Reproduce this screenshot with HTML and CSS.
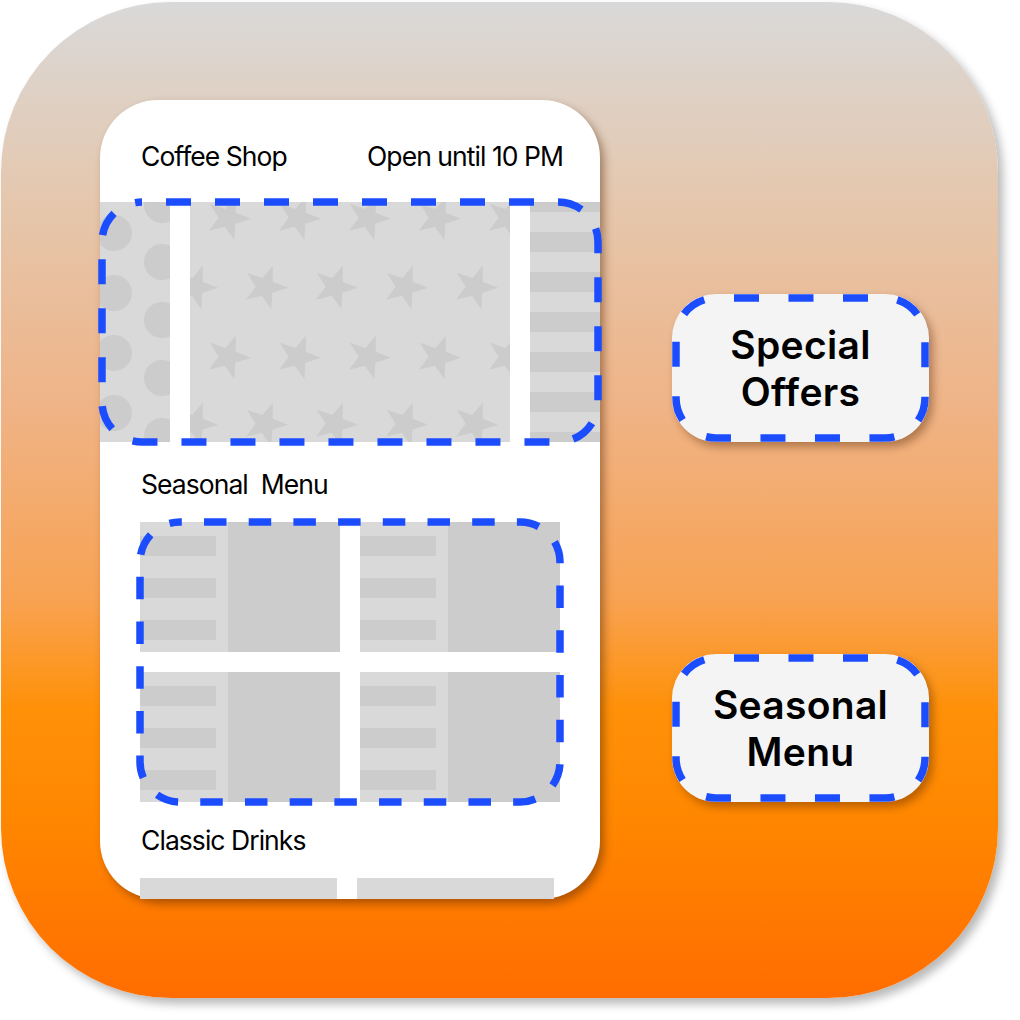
FILE: index.html
```html
<!DOCTYPE html>
<html lang="en">
<head>
<meta charset="utf-8">
<title>Coffee Shop</title>
<link rel="stylesheet" href="styles.css">
</head>
<body>
<div class="icon">
  <div class="phone">
    <div class="phone-header">
      <span>Coffee Shop</span>
      <span>Open until 10 PM</span>
    </div>

    <div class="banner">
      <div class="banner-viewport">
        <div class="banner-track">
          <div class="promo">
            <svg class="promo-art" width="320" height="240" viewBox="0 0 320 240">
              <g fill="#cccccc">
                <circle cx="264" cy="31" r="18"/>
                <circle cx="264" cy="91" r="18"/>
                <circle cx="264" cy="151" r="18"/>
                <circle cx="264" cy="211" r="18"/>
                <circle cx="312" cy="3" r="18"/>
                <circle cx="312" cy="60" r="18"/>
                <circle cx="312" cy="118" r="18"/>
                <circle cx="312" cy="176" r="18"/>
                <circle cx="312" cy="234" r="18"/>
              </g>
            </svg>
          </div>
          <div class="promo">
            <svg class="promo-art" width="320" height="240" viewBox="0 0 320 240">
              <defs>
                <polygon id="star" fill="#cccccc" transform="rotate(20)" points="0,-23 5.5,-7.6 21.9,-7.1 8.9,2.9 13.5,18.6 0,9.4 -13.5,18.6 -8.9,2.9 -21.9,-7.1 -5.5,-7.6"/>
              </defs>
              <use href="#star" x="38" y="16"/>
              <use href="#star" x="108" y="16"/>
              <use href="#star" x="178" y="16"/>
              <use href="#star" x="248" y="16"/>
              <use href="#star" x="318" y="16"/>
              <use href="#star" x="5" y="85"/>
              <use href="#star" x="75" y="85"/>
              <use href="#star" x="145" y="85"/>
              <use href="#star" x="215" y="85"/>
              <use href="#star" x="285" y="85"/>
              <use href="#star" x="38" y="155"/>
              <use href="#star" x="108" y="155"/>
              <use href="#star" x="178" y="155"/>
              <use href="#star" x="248" y="155"/>
              <use href="#star" x="318" y="155"/>
              <use href="#star" x="5" y="222"/>
              <use href="#star" x="75" y="222"/>
              <use href="#star" x="145" y="222"/>
              <use href="#star" x="215" y="222"/>
              <use href="#star" x="285" y="222"/>
            </svg>
          </div>
          <div class="promo promo-stripes"></div>
        </div>
      </div>
      <svg class="dash-outline" width="500" height="240" viewBox="0 0 500 240">
        <rect x="2" y="0" width="496" height="240" rx="40" ry="40" stroke-dasharray="25 24" stroke-dashoffset="25"/>
      </svg>
    </div>

    <div class="section-title">Seasonal  Menu</div>

    <div class="menu">
      <div class="menu-grid">
        <div class="menu-item">
          <div class="menu-text"><i></i><i></i><i></i></div>
          <div class="menu-photo"></div>
        </div>
        <div class="menu-item">
          <div class="menu-text"><i></i><i></i><i></i></div>
          <div class="menu-photo"></div>
        </div>
        <div class="menu-item">
          <div class="menu-text"><i></i><i></i><i></i></div>
          <div class="menu-photo"></div>
        </div>
        <div class="menu-item">
          <div class="menu-text"><i></i><i></i><i></i></div>
          <div class="menu-photo"></div>
        </div>
      </div>
      <svg class="dash-outline" width="420" height="280" viewBox="0 0 420 280">
        <rect x="0" y="0" width="420" height="280" rx="40" ry="40" stroke-dasharray="22.5 22.2" stroke-dashoffset="20.7"/>
      </svg>
    </div>

    <div class="section-title">Classic Drinks</div>

    <div class="drinks">
      <div class="drink"></div>
      <div class="drink"></div>
    </div>
  </div>

  <div class="callouts">
    <div class="callout">
      <svg class="callout-dash" width="257" height="148" viewBox="0 0 257 148">
        <rect x="4" y="4" width="249" height="140" rx="40" ry="40" stroke-dasharray="25 29.5" stroke-dashoffset="36.5"/>
      </svg>
      <span class="callout-text">Special<br>Offers</span>
    </div>
    <div class="callout">
      <svg class="callout-dash" width="257" height="148" viewBox="0 0 257 148">
        <rect x="4" y="4" width="249" height="140" rx="40" ry="40" stroke-dasharray="25 29.5" stroke-dashoffset="36.5"/>
      </svg>
      <span class="callout-text">Seasonal<br>Menu</span>
    </div>
  </div>
</div>
</body>
</html>
```

FILE: styles.css
```css
html, body {
  margin: 0;
  padding: 0;
  background: #ffffff;
}

body {
  width: 1020px;
  height: 1020px;
  font-family: "Inter", "Noto Sans", "Liberation Sans", sans-serif;
  color: #000000;
}

.icon {
  box-sizing: border-box;
  width: 997px;
  height: 996px;
  margin: 2px 0 0 1px;
  padding: 98px 0 0 99px;
  display: flex;
  align-items: flex-start;
  border-radius: 170px;
  background: linear-gradient(to bottom,
    #d9d9d9 0%,
    #e5c7ad 20%,
    #efb488 40%,
    #f8a252 60%,
    #ff9108 71%,
    #ff8700 82%,
    #ff6d00 100%);
  box-shadow: 5px 6px 10px rgba(0, 0, 0, 0.28);
}

/* ---------- phone card ---------- */
.phone {
  box-sizing: border-box;
  width: 500px;
  height: 799px;
  flex: none;
  background: #ffffff;
  border-radius: 58px;
  box-shadow: 4px 5px 8px rgba(80, 35, 0, 0.45);
  display: flex;
  flex-direction: column;
}

.phone-header {
  display: flex;
  justify-content: space-between;
  padding: 42px 37px 0 41px;
  font-size: 26.5px;
  line-height: 28px;
  letter-spacing: -0.95px;
}

.section-title {
  padding-left: 41px;
  font-size: 26.5px;
  line-height: 28px;
  letter-spacing: -0.95px;
  white-space: pre;
}

/* ---------- banner carousel ---------- */
.banner {
  position: relative;
  margin-top: 32px;
  height: 240px;
}

.banner-viewport {
  height: 240px;
  overflow: hidden;
}

.banner-track {
  display: flex;
  gap: 20px;
  margin-left: -250px;
}

.promo {
  flex: none;
  width: 320px;
  height: 240px;
  background: #d9d9d9;
}

.promo-art {
  display: block;
}

.promo-stripes {
  background: repeating-linear-gradient(to bottom,
    #cccccc 0 10px,
    #d9d9d9 10px 30px,
    #cccccc 30px 40px);
}

.dash-outline {
  position: absolute;
  left: 0;
  top: 0;
  overflow: visible;
  pointer-events: none;
}

.dash-outline rect,
.callout-dash rect {
  fill: none;
  stroke: #1b4dff;
  stroke-width: 7.5;
}

/* ---------- seasonal menu grid ---------- */
.banner + .section-title {
  margin-top: 28px;
}

.menu {
  position: relative;
  margin: 24px 0 0 40px;
  width: 420px;
  height: 280px;
}

.menu-grid {
  display: grid;
  grid-template-columns: 200px 200px;
  grid-template-rows: 130px 130px;
  gap: 20px;
}

.menu-item {
  display: flex;
}

.menu-text {
  width: 88px;
  background: #d9d9d9;
  display: flex;
  flex-direction: column;
  gap: 22px;
  padding-top: 14px;
  box-sizing: border-box;
}

.menu-text i {
  display: block;
  width: 76px;
  height: 20px;
  background: #cccccc;
}

.menu-photo {
  flex: 1;
  background: #cccccc;
}

.menu + .section-title {
  margin-top: 24px;
}

/* ---------- classic drinks ---------- */
.drinks {
  display: flex;
  gap: 20px;
  margin: 24px 0 0 40px;
}

.drink {
  width: 197px;
  height: 21px;
  background: #d9d9d9;
}

/* ---------- callouts ---------- */
.callouts {
  display: flex;
  flex-direction: column;
  gap: 212px;
  margin-left: 72px;
  padding-top: 194px;
}

.callout {
  position: relative;
  width: 257px;
  height: 148px;
  border-radius: 44px;
  background: #f4f4f4;
  box-shadow: 4px 5px 8px rgba(80, 35, 0, 0.4);
  display: flex;
  align-items: center;
  justify-content: center;
}

.callout-dash {
  position: absolute;
  left: 0;
  top: 0;
}

.callout-text {
  position: relative;
  font-size: 39px;
  font-weight: 600;
  line-height: 47px;
  text-align: center;
  letter-spacing: 0.3px;
}
```
